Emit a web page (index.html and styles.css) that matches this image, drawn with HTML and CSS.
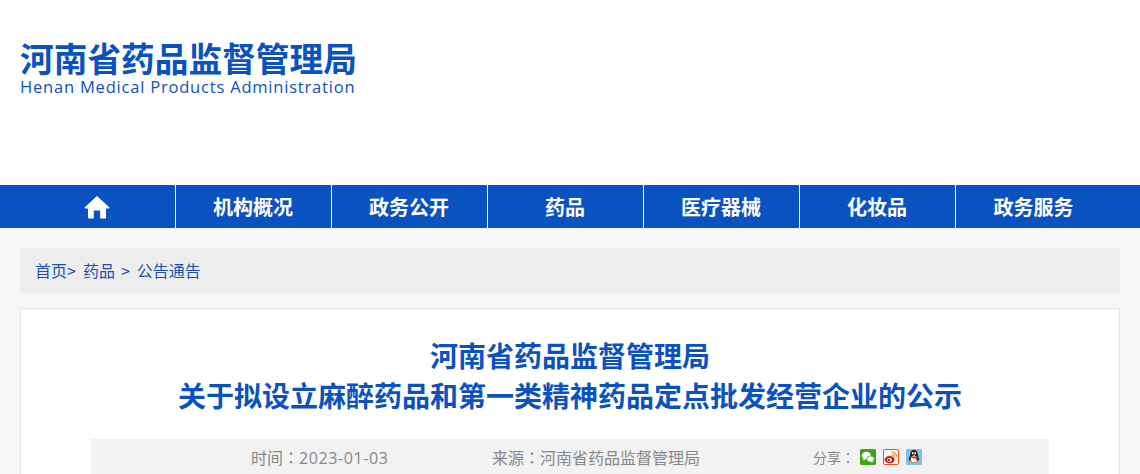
FILE: index.html
```html
<!DOCTYPE html>
<html>
<head>
<title>河南省药品监督管理局</title>
<meta charset="utf-8"/>
<link rel="stylesheet" href="styles.css">
</head>
<body>
<header class="top">
<div class="logo">
<div class="logo-cn">河南省药品监督管理局</div>
<div class="logo-en">Henan Medical Products Administration</div>
</div>
</header>
<nav class="nav">
<ul>
<li><a href="#" title="首页"><svg class="home" viewBox="0 0 26 24" width="26" height="24"><path d="M13 1 L25.5 12.6 Q25.6 13.6 24.6 13.6 L22 13.6 L22 22.4 Q22 23.4 21 23.4 L16.2 23.4 L16.2 15.4 L9.8 15.4 L9.8 23.4 L5 23.4 Q4 23.4 4 22.4 L4 13.6 L1.4 13.6 Q0.4 13.6 0.5 12.6 Z" fill="#fff"/></svg></a></li>
<li><a href="#">机构概况</a></li>
<li><a href="#">政务公开</a></li>
<li><a href="#">药品</a></li>
<li><a href="#">医疗器械</a></li>
<li><a href="#">化妆品</a></li>
<li class="last"><a href="#">政务服务</a></li>
</ul>
</nav>
<main class="wrap">
<div class="crumb"><a href="#">首页</a><span class="sep first">&gt;</span><a href="#">药品</a><span class="sep">&gt;</span><a href="#">公告通告</a></div>
<article class="box">
<h1>河南省药品监督管理局<br/>关于拟设立麻醉药品和第一类精神药品定点批发经营企业的公示</h1>
<div class="meta">
<span class="time">时间<i class="colon">：</i><b class="date">2023-01-03</b></span>
<span class="source">来源<i class="colon">：</i>河南省药品监督管理局</span>
<span class="share">分享<i class="colon">：</i></span>
<a class="ico" href="#" title="微信"><svg viewBox="0 0 16 16" width="16" height="16"><rect x="0" y="0" width="16" height="16" rx="1.5" fill="#3fa414"/><ellipse cx="6.4" cy="6.6" rx="4.6" ry="3.8" fill="#fff"/><path d="M3.6 9 L3 11.4 L6 10 Z" fill="#fff"/><ellipse cx="10.6" cy="10" rx="3.8" ry="3.1" fill="#fff" stroke="#3fa414" stroke-width=".8"/><path d="M12.2 12.4 L13.2 14 L10.6 13 Z" fill="#fff"/></svg></a>
<a class="ico" href="#" title="微博"><svg viewBox="0 0 16 16" width="16" height="16"><rect x=".5" y=".5" width="15" height="15" rx="1.5" fill="#fff" stroke="#e8541c"/><ellipse cx="6.6" cy="10.6" rx="5" ry="3.6" fill="#d9141a"/><ellipse cx="6.4" cy="10.8" rx="2.4" ry="1.9" fill="#fff"/><circle cx="6" cy="11" r="1.1" fill="#222"/><path d="M8.5 3 A5 5 0 0 1 13.6 8.4" fill="none" stroke="#f29a1f" stroke-width="1.5"/><path d="M8.8 5.5 A2.6 2.6 0 0 1 11.2 8.2" fill="none" stroke="#f29a1f" stroke-width="1.3"/></svg></a>
<a class="ico" href="#" title="QQ"><svg viewBox="0 0 16 16" width="16" height="16"><rect x="0" y="0" width="16" height="16" rx="1.5" fill="#7cc0ec"/><path d="M8 1 C5.4 1 4.4 3 4.3 5.2 C4.2 6.6 3 8.6 2.8 10.4 C2.7 11.4 3.4 11.6 4 11 C4.4 12.4 5.8 13.4 8 13.4 C10.2 13.4 11.6 12.4 12 11 C12.6 11.6 13.3 11.4 13.2 10.4 C13 8.6 11.8 6.6 11.7 5.2 C11.6 3 10.6 1 8 1 Z" fill="#181818"/><ellipse cx="8" cy="10" rx="3.3" ry="3.2" fill="#fff"/><circle cx="6.7" cy="4" r="1" fill="#fff"/><circle cx="9.3" cy="4" r="1" fill="#fff"/><path d="M5.8 5.6 L10.2 5.6 L8 7 Z" fill="#f5a81c"/><path d="M4.2 7.6 L11.8 7.6 L11.4 9 L10.8 11.6 L9.6 9.4 L4.8 9 Z" fill="#e0281c"/><path d="M3 14.8 L7.2 14 L4.4 12.4 Z M13 14.8 L8.8 14 L11.6 12.4 Z" fill="#f5a81c"/></svg></a>
</div>
</article>
</main>
</body>
</html>
```
FILE: styles.css
```css
* {
font-family: "Noto Sans CJK SC", sans-serif;
box-sizing: border-box;
}
html, body {
height: 474px;
overflow: hidden;
}
body {
margin: 0;
background-color: #f6f8f8;
}
a {
color: inherit;
text-decoration: none;
}
.top {
height: 185px;
padding: 38px 20px 0;
background-color: #fff;
}
.logo {
color: #0b52c1;
}
.logo-cn {
font-size: 33.7px;
font-weight: 700;
line-height: 40px;
white-space: nowrap;
}
.logo-en {
font-family: "Open Sans", sans-serif;
font-size: 16.5px;
line-height: 18px;
letter-spacing: .8px;
white-space: nowrap;
}
.nav {
height: 43px;
padding-left: 20px;
background-color: #0b52c1;
}
.nav ul {
display: flex;
margin: 0;
padding: 0;
list-style: none;
}
.nav li {
width: 156px;
height: 43px;
padding-right: 1px;
border-right: 1px solid #fff;
color: #fff;
font-size: 20px;
font-weight: 700;
line-height: 43px;
text-align: center;
}
.nav li.last {
border-right: 0;
}
.nav li a {
display: block;
}
.home {
display: block;
margin: 10px auto 0;
}
.wrap {
padding: 20px 20px 0;
}
.crumb {
height: 45px;
padding-left: 15px;
background-color: #ededed;
color: #1d4fb5;
font-size: 16px;
line-height: 45px;
}
.sep {
margin: 0 7px 0 6px;
}
.sep.first {
margin-left: 0;
}
.box {
margin-top: 15px;
padding-top: 26px;
height: 166px;
background-color: #fff;
border: 1px solid #e5e5e5;
border-bottom: 0;
}
h1 {
margin: 0;
color: #0b52c1;
font-size: 28px;
font-weight: 700;
line-height: 40px;
text-align: center;
}
.meta {
display: flex;
align-items: center;
height: 35px;
margin: 24px 70px 0;
padding-left: 160px;
background-color: #f2f2f2;
color: #888;
font-size: 16px;
}
.colon {
font-family: "Noto Sans CJK TC", sans-serif;
font-style: normal;
}
.date {
font-family: "Open Sans", sans-serif;
font-weight: 400;
letter-spacing: .6px;
}
.time {
width: 241px;
}
.source {
width: 321px;
}
.share {
width: 47px;
font-size: 14px;
}
.ico {
display: block;
width: 16px;
height: 16px;
margin-right: 7px;
}
.ico svg {
display: block;
}
```
